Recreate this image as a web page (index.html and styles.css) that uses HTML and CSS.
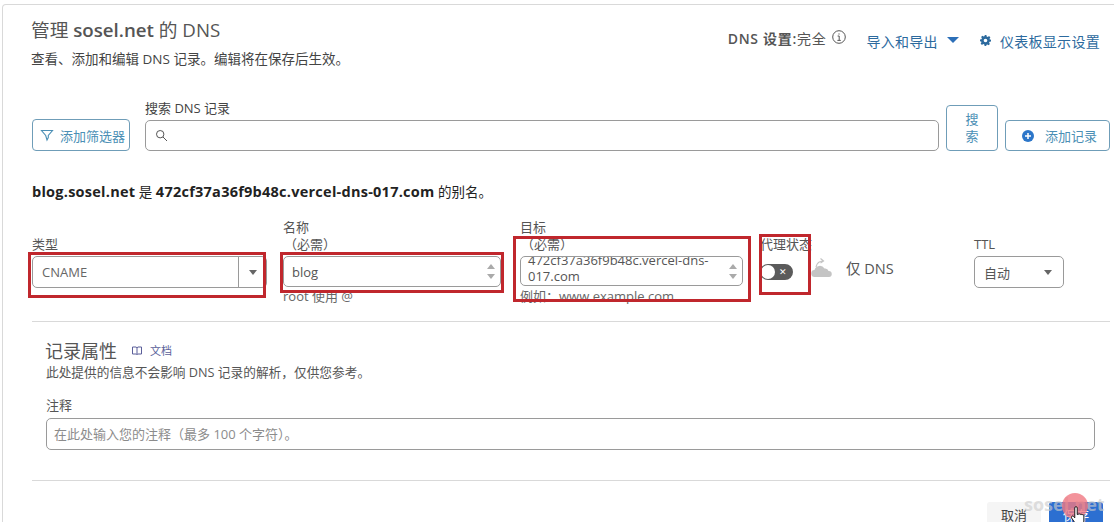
FILE: index.html
```html
<!DOCTYPE html>
<html lang="zh-CN">
<head>
    <meta charset="UTF-8">
    <meta name="viewport" content="width=device-width, initial-scale=1.0">
    <title>管理 DNS</title>
    <link rel="stylesheet" href="styles.css">
</head>
<body>
    <div class="card">
        <div class="page-head">
            <div>
                <h2 class="page-title">管理 <b>sosel.net</b> 的 DNS</h2>
                <p class="page-sub">查看、添加和编辑 DNS 记录。编辑将在保存后生效。</p>
            </div>
            <div class="head-links">
                <span class="dns-mode"><b>DNS 设置:</b>完全</span>
                <svg class="info-icon" width="14" height="14" viewBox="0 0 14 14" fill="none" stroke="#555"><circle cx="7" cy="7" r="6.3"/><path d="M5.6 6h1.6v4.2M5.4 10.4h3.4M7 3.4v1.2"/></svg>
                <a class="link export-link">导入和导出</a>
                <span class="caret-blue"></span>
                <svg class="gear-icon" width="11" height="11" viewBox="0 0 12 12"><path fill="#2c6a9e" fill-rule="evenodd" d="M5 0h2l.3 1.6 1.2.5L9.900 1.200l1.400 1.400-.9 1.400.5 1.200L12 5v2l-1.600.3-.5 1.200.9 1.400-1.400 1.400-1.400-.9-1.200.5L7 12H5l-.3-1.600-1.200-.5-1.400.9L.7 9.400l.9-1.400-.5-1.200L0 7V5l1.600-.3.500-1.200-.9-1.400L2.600.7l1.400.9 1.200-.5zM6 4a2 2 0 1 0 0 4 2 2 0 0 0 0-4z"/></svg>
                <a class="link">仪表板显示设置</a>
            </div>
        </div>

        <div class="search-row">
            <button class="btn filter-btn">
                <svg width="14" height="14" viewBox="0 0 14 14" fill="none" stroke="#4b8fb5" stroke-width="1.1"><path d="M1.500 2.500h11L8.300 7.500v2L7 12 5.700 7.500z"/></svg>
                添加筛选器
            </button>
            <div class="search-field">
                <label class="search-label">搜索 DNS 记录</label>
                <div class="input search-input">
                    <svg width="13" height="13" viewBox="0 0 13 13" fill="none" stroke="#555" stroke-width="1"><circle cx="5.200" cy="5.200" r="3.700"/><path d="M8 8l4 4"/></svg>
                </div>
            </div>
            <button class="btn search-btn">搜索</button>
            <button class="btn add-btn">
                <svg width="12" height="12" viewBox="0 0 12 12"><circle cx="6" cy="6" r="6" fill="#2c76c9"/><path d="M3 6h6M6 3v6" stroke="#fff" stroke-width="1.500"/></svg>
                添加记录
            </button>
        </div>

        <p class="alias-line"><b>blog.sosel.net</b> 是 <b>472cf37a36f9b48c.vercel-dns-017.com</b> 的别名。</p>

        <div class="record-form">
            <div class="field field-type">
                <div class="labels">类型</div>
                <div class="input select-box">
                    <span class="select-value">CNAME</span>
                    <span class="select-arrow"><i class="caret-gray"></i></span>
                </div>
            </div>
            <div class="field field-name">
                <div class="labels">名称<span class="required">（必需）</span></div>
                <div class="input text-box">
                    <span class="grow">blog</span>
                    <span class="spinner"><i class="up"></i><i class="down"></i></span>
                </div>
                <div class="hint">root 使用 @</div>
            </div>
            <div class="field field-target">
                <div class="labels">目标<span class="required">（必需）</span></div>
                <div class="input area-box">
                    <span class="grow area-text">472cf37a36f9b48c.vercel-dns-017.com</span>
                    <span class="spinner"><i class="up"></i><i class="down"></i></span>
                </div>
                <div class="hint">例如：www.example.com</div>
            </div>
            <div class="field field-proxy">
                <div class="labels">代理状态</div>
                <div class="proxy-row">
                    <span class="toggle"><i class="knob"></i><span class="toggle-x">✕</span></span>
                    <svg class="cloud" width="26" height="22" viewBox="0 0 26 22"><path fill="#c4c4c4" d="M8 20a3.500 3.500 0 0 1-.5-7A5.500 5.500 0 0 1 17.500 11.500 3.500 3.500 0 0 1 21.500 14 3 3 0 0 1 22 20z"/><path fill="none" stroke="#c4c4c4" stroke-width="1.200" d="M1 14h3M9 10c1-4 4-6 7-6M13.500 1.500l3 2.500-3 2"/></svg>
                    <span class="proxy-text">仅 DNS</span>
                </div>
            </div>
            <div class="field field-ttl">
                <div class="labels">TTL</div>
                <div class="input ttl-box">
                    <span class="grow">自动</span>
                    <i class="caret-gray"></i>
                </div>
            </div>
        </div>

        <hr class="rule rule-top">

        <div class="attrs">
            <div class="attrs-head">
                <h3 class="attrs-title">记录属性</h3>
                <svg width="10" height="9" viewBox="0 0 10 9" fill="none" stroke="#5b5f9a"><path d="M.5 1h3.500l1 .8L6 1h3.500v7H6L5 8.500 4 8H.5zM5 1.800V8"/></svg>
                <a class="doc-link">文档</a>
            </div>
            <p class="attrs-sub">此处提供的信息不会影响 DNS 记录的解析，仅供您参考。</p>
            <label class="note-label">注释</label>
            <div class="input note-input">在此处输入您的注释（最多 100 个字符）。</div>
        </div>

        <hr class="rule rule-bottom">

        <div class="actions">
            <button class="btn-cancel">取消</button>
            <button class="btn-save">保存</button>
        </div>
    </div>

    <!-- 标注和录屏覆盖层 -->
    <div class="mark mark-type"></div>
    <div class="mark mark-name"></div>
    <div class="mark mark-target"></div>
    <div class="mark mark-proxy"></div>
    <div class="watermark">sosel.net</div>
    <div class="click-dot"></div>
    <svg class="hand" width="17" height="18" viewBox="0 0 18 19"><path fill="#fff" stroke="#111" d="M4 2a1.300 1.300 0 0 1 2.600 0v7l1-.2a1.200 1.200 0 0 1 2 .2 1.200 1.200 0 0 1 2 .4 1.200 1.200 0 0 1 2 .8V16l-1 3H5L.5 12.500c-.6-1.500.9-2.500 2-1.500L4 12.500z"/></svg>
</body>
</html>
```

FILE: styles.css
```css
* {
    box-sizing: border-box;
}

html, body {
    height: 100%;
}

body {
    margin: 0;
    overflow: hidden;
    position: relative;
    background: #fff;
    color: #555;
    font-family: "Open Sans", "Noto Sans CJK SC", sans-serif;
    font-size: 13px;
}

.card {
    width: 1140px;
    height: 518px;
    margin: 4px 0 0 2px;
    padding: 0 0 0 29px;
    border: 1px solid #d9d9d9;
    border-bottom: 0;
    border-radius: 4px 4px 0 0;
}

.page-head {
    display: flex;
    justify-content: space-between;
    width: 1068px;
    padding-top: 12px;
}

.page-title {
    margin: 0 0 0 -1px;
    font-size: 18.7px;
    font-weight: 400;
    line-height: 26px;
}

.page-title b, .alias-line b, .dns-mode b {
    font-weight: 600;
}

.page-sub {
    margin: 6px 0 0 -1px;
    font-size: 13.5px;
    line-height: 20px;
    color: #444;
}

.head-links {
    display: flex;
    align-items: center;
    height: 24px;
    margin-top: 10px;
}

.dns-mode {
    font-size: 14px;
    letter-spacing: .7px;
    position: relative;
    top: -1px;
}

.info-icon {
    margin: 0 20px 0 6px;
    position: relative;
    top: -2px;
}

.link {
    color: #2c6a9e;
    font-size: 14px;
    letter-spacing: .3px;
    position: relative;
    top: 2px;
}

.export-link {
    margin-right: 9px;
}

.caret-blue {
    width: 0;
    height: 0;
    border-left: 6px solid transparent;
    border-right: 6px solid transparent;
    border-top: 6px solid #2c6fb8;
    margin-right: 21px;
    position: relative;
    top: 1px;
}

.gear-icon {
    margin-right: 9px;
    position: relative;
    top: 1px;
}

.search-row {
    display: flex;
    align-items: flex-end;
    width: 1078px;
    margin-top: 29px;
}

.btn {
    background: #fff;
    border: 1px solid #6f9db8;
    border-radius: 4px;
    color: #4b8fb5;
    font: inherit;
    padding: 0;
}

.filter-btn {
    display: flex;
    align-items: center;
    gap: 6px;
    width: 98px;
    height: 32px;
    padding-left: 7px;
}

.search-field {
    flex: 1;
    margin: 0 7px 0 15px;
}

.search-label {
    display: block;
    line-height: 20px;
    margin-bottom: 2px;
    color: #444;
}

.input {
    border: 1px solid #9a9a9a;
    border-radius: 5px;
    background: #fff;
}

.search-input {
    display: flex;
    align-items: center;
    height: 31px;
    padding-left: 9px;
}

.search-btn {
    width: 52px;
    height: 46px;
    padding: 0 14px;
    line-height: 17px;
    margin-right: 7px;
}

.add-btn {
    display: flex;
    align-items: center;
    gap: 11px;
    width: 105px;
    height: 31px;
    padding-left: 16px;
}

.alias-line {
    margin: 31px 0 0;
    line-height: 20px;
    font-size: 13.5px;
    color: #222;
}

.alias-line b {
    font-size: 14.5px;
    font-weight: 700;
    letter-spacing: .25px;
}

.record-form {
    display: flex;
    margin-top: 15px;
    height: 104px;
}

.labels {
    height: 39px;
    padding-bottom: 3px;
    display: flex;
    flex-direction: column;
    justify-content: flex-end;
    line-height: 17px;
}

.required {
    margin-left: 1px;
}

.field-type {
    width: 235px;
}

.field-name {
    width: 218px;
    margin-left: 16px;
}

.field-target {
    width: 223px;
    margin-left: 19px;
}

.field-proxy {
    width: 140px;
    margin-left: 17px;
}

.field-ttl {
    width: 90px;
    margin-left: 74px;
}

.select-box {
    display: flex;
    height: 32px;
    line-height: 30px;
}

.select-value {
    flex: 1;
    padding-left: 9px;
    color: #666;
}

.select-arrow {
    width: 28px;
    border-left: 1px solid #9a9a9a;
    display: flex;
    align-items: center;
    justify-content: center;
}

.caret-gray {
    display: block;
    width: 0;
    height: 0;
    border-left: 4px solid transparent;
    border-right: 4px solid transparent;
    border-top: 5px solid #666;
}

.text-box {
    display: flex;
    align-items: center;
    height: 31px;
    padding: 0 3px 0 8px;
}

.grow {
    flex: 1;
}

.spinner {
    display: flex;
    flex-direction: column;
    gap: 5px;
    padding: 0 2px;
}

.spinner .up {
    border-left: 4px solid transparent;
    border-right: 4px solid transparent;
    border-bottom: 5px solid #aaa;
}

.spinner .down {
    border-left: 4px solid transparent;
    border-right: 4px solid transparent;
    border-top: 5px solid #aaa;
}

.area-box {
    display: flex;
    align-items: center;
    height: 30px;
    margin-bottom: 1px;
    padding: 0 3px 0 7px;
    overflow: hidden;
    line-height: 16px;
}

.area-text {
    width: 190px;
    align-self: flex-start;
    margin-top: -5px;
    overflow-wrap: anywhere;
}

.hint {
    line-height: 18px;
    color: #666;
}

.proxy-row {
    display: flex;
    align-items: center;
    height: 24px;
    margin-top: 4px;
}

.toggle {
    position: relative;
    display: block;
    width: 33px;
    height: 16px;
    background: #5b5b5b;
    border-radius: 8px;
}

.knob {
    display: block;
    width: 14px;
    height: 14px;
    margin: 1px;
    background: #fff;
    border-radius: 50%;
}

.toggle-x {
    position: absolute;
    left: 19px;
    top: 0;
    color: #fff;
    font-size: 9px;
    line-height: 16px;
}

.cloud {
    margin: -9px 13px 0 14px;
}

.proxy-text {
    font-size: 14.5px;
    margin-top: -9px;
}

.ttl-box {
    display: flex;
    align-items: center;
    height: 32px;
    padding: 0 11px 0 9px;
}

.rule {
    margin: 0;
    width: 1078px;
    border: 0;
    border-top: 1px solid #d9d9d9;
}

.attrs {
    width: 1063px;
    padding: 14px 0 0 14px;
}

.attrs-head {
    display: flex;
    align-items: center;
    height: 28px;
    margin-left: -1px;
}

.attrs-title {
    margin: 0 15px 0 0;
    font-size: 18px;
    font-weight: 400;
}

.doc-link {
    margin-left: 8px;
    font-size: 11px;
    color: #5b5f9a;
}

.attrs-sub {
    margin: 0;
    font-size: 12.7px;
    line-height: 17px;
}

.note-label {
    display: block;
    margin-top: 15px;
    line-height: 18px;
}

.note-input {
    height: 32px;
    margin-top: 4px;
    padding-left: 7px;
    line-height: 30px;
    color: #8c8c8c;
}

.rule-bottom {
    margin-top: 30px;
}

.actions {
    display: flex;
    gap: 8px;
    margin: 21px 0 0 955px;
}

.btn-cancel, .btn-save {
    width: 54px;
    height: 34px;
    border: 0;
    border-radius: 3px;
    font: inherit;
    padding: 0 0 9px;
}

.btn-cancel {
    background: #f5f5f5;
    color: #444;
}

.btn-save {
    background: #2c6fd1;
    color: #fff;
}

/* 红色标注框 */
.mark {
    position: absolute;
    border: 3px solid #c0272d;
}

.mark-type {
    left: 28px;
    top: 252px;
    width: 238px;
    height: 46px;
}

.mark-name {
    left: 280px;
    top: 252px;
    width: 224px;
    height: 41px;
}

.mark-target {
    left: 513px;
    top: 236px;
    width: 238px;
    height: 66px;
}

.mark-proxy {
    left: 759px;
    top: 234px;
    width: 52px;
    height: 61px;
}

.watermark {
    position: absolute;
    left: 1024px;
    top: 492px;
    font-size: 18px;
    font-weight: 700;
    line-height: 24px;
    color: rgba(205, 205, 205, 0.65);
}

.click-dot {
    position: absolute;
    left: 1062px;
    top: 493px;
    width: 26px;
    height: 26px;
    border-radius: 50%;
    background: rgba(240, 120, 130, 0.8);
}

.hand {
    position: absolute;
    left: 1071px;
    top: 506px;
}
```
